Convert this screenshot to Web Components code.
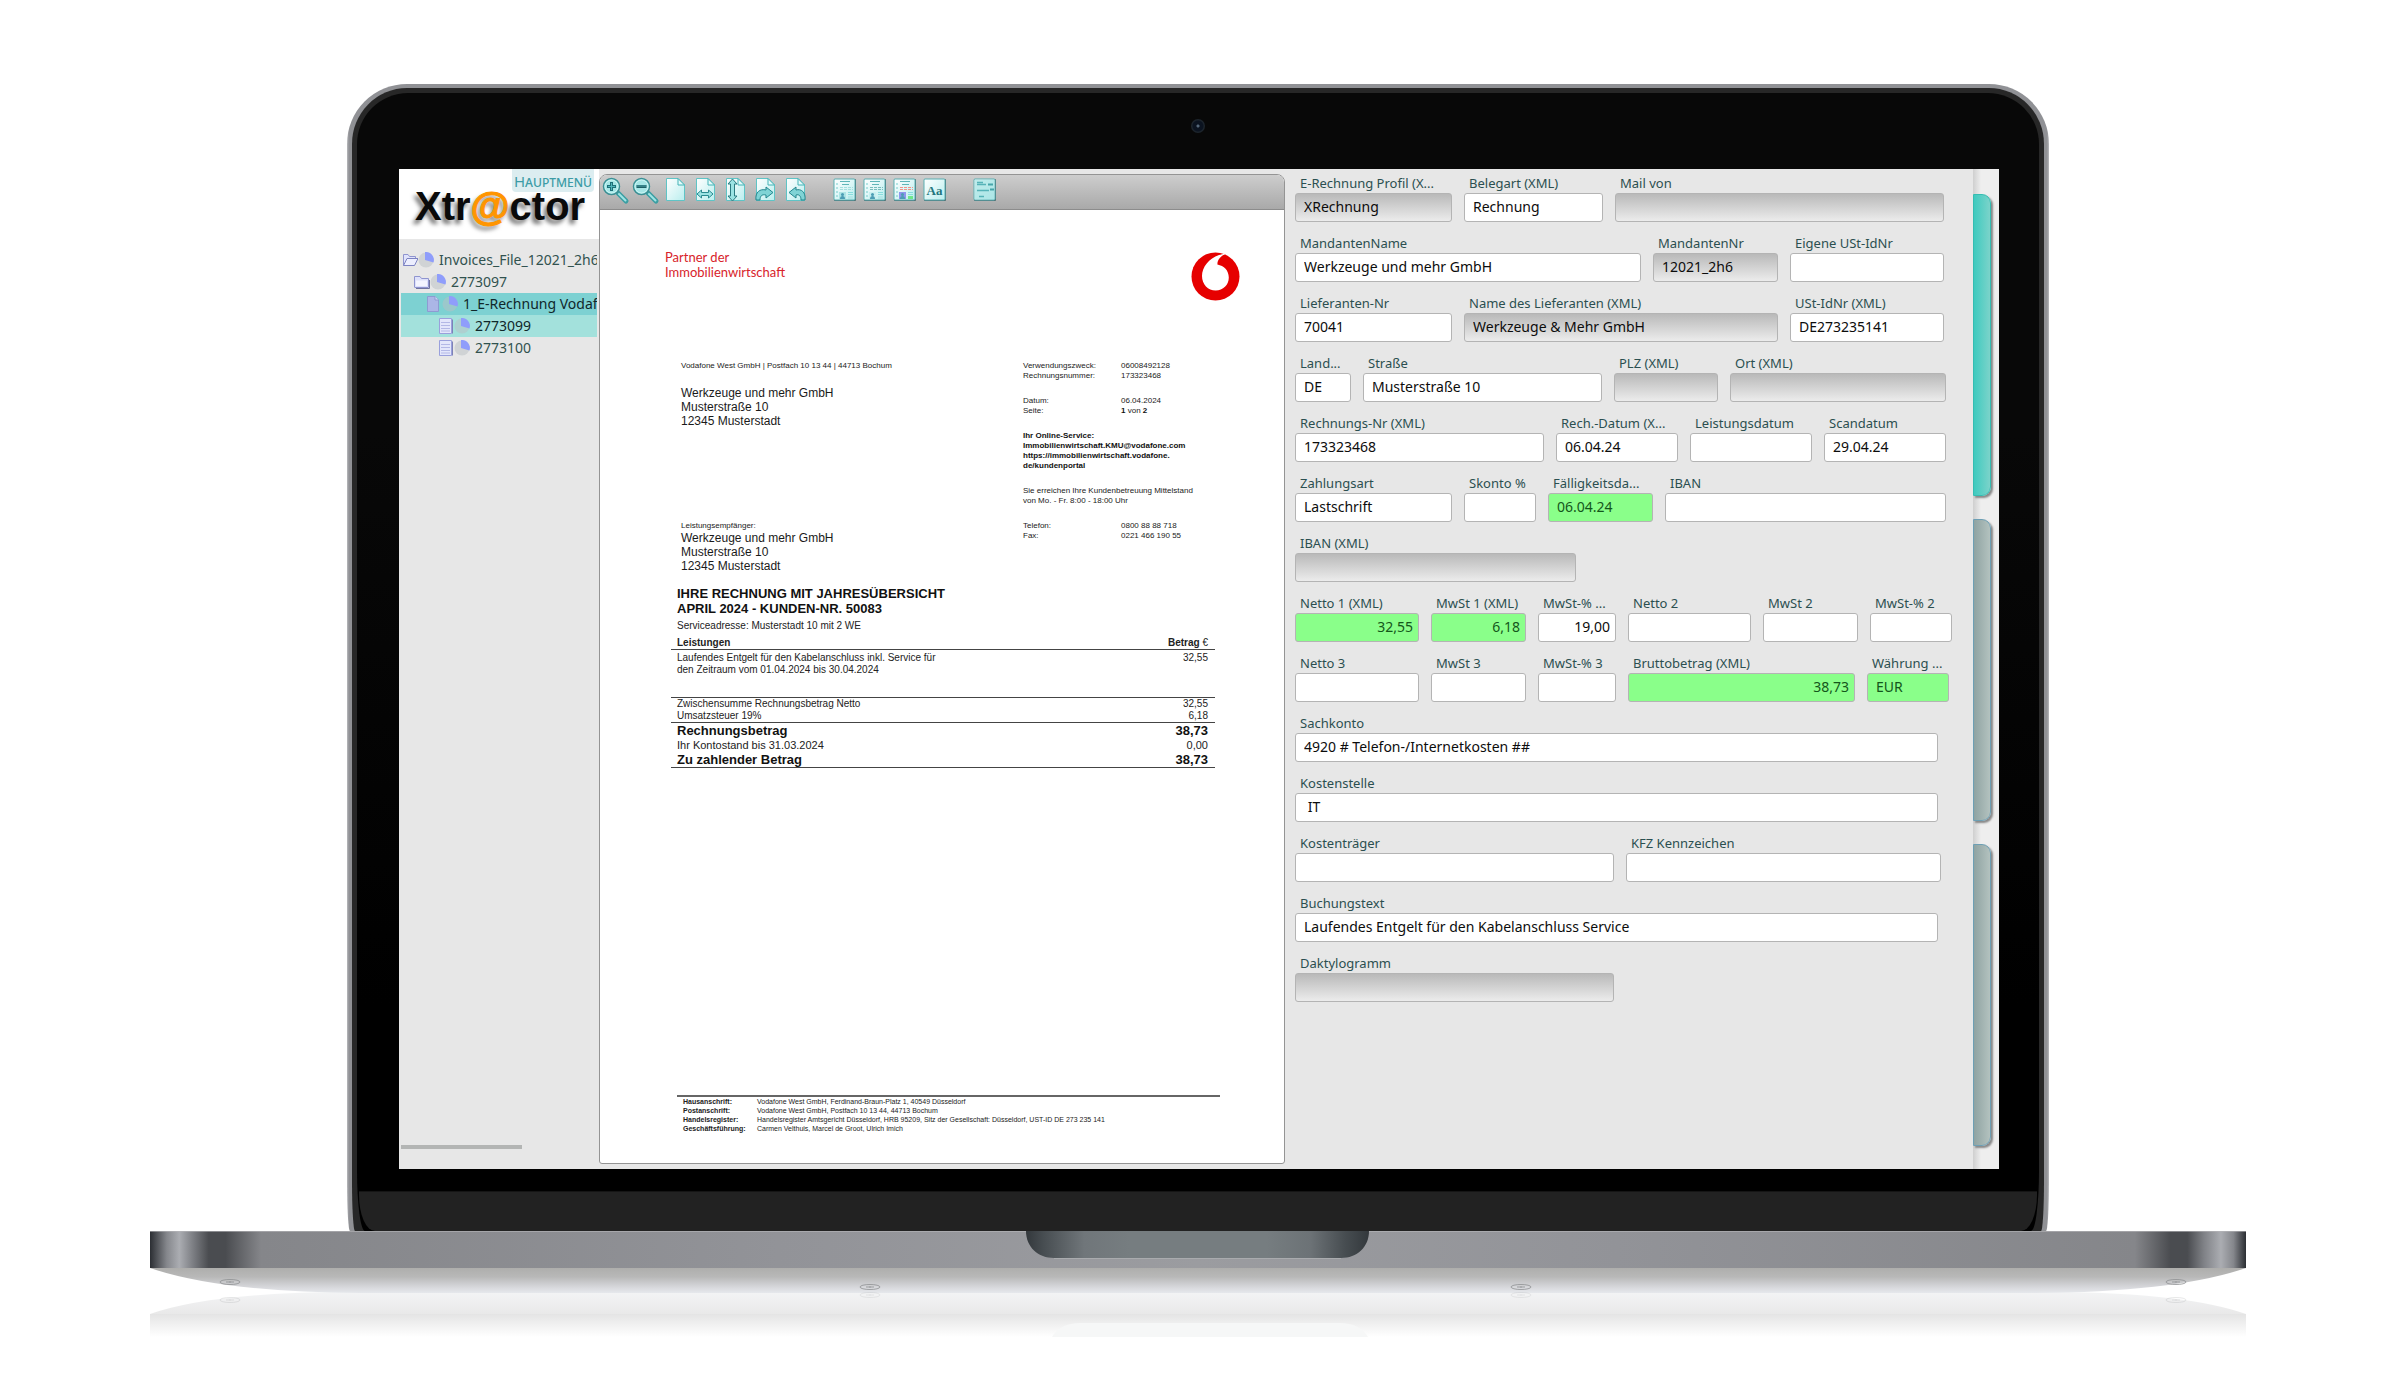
<!DOCTYPE html>
<html lang="de">
<head>
<meta charset="utf-8">
<title>Xtr@ctor</title>
<style>
  body { margin: 0; background: #fff; font-family: "Noto Sans", "Open Sans", sans-serif; font-size: 13px; color: #111; }
</style>
</head>
<body>
<laptop-frame>
  <xt-sidebar>
    <tree-node icon="open" level="0">Invoices_File_12021_2h6_</tree-node>
    <tree-node icon="folder" level="1">2773097</tree-node>
    <tree-node icon="file" level="2" state="selected">1_E-Rechnung Vodafone</tree-node>
    <tree-node icon="page" level="3" state="related">2773099</tree-node>
    <tree-node icon="page" level="3">2773100</tree-node>
  </xt-sidebar>
  <doc-viewer><invoice-page></invoice-page></doc-viewer>
  <xt-form></xt-form>
  <side-tabs></side-tabs>
</laptop-frame>

<script>
function define(name, html, setup) {
  const template = document.createElement('template');
  customElements.define(name, class extends HTMLElement {
    connectedCallback() {
      if (this.shadowRoot) return;
      const root = this.attachShadow({ mode: 'open' });
      template.innerHTML = typeof html === 'function' ? html(this) : html;
      root.append(template.content.cloneNode(true));
      if (setup) setup(this, root);
    }
  });
}

/* ---------- Laptop ---------- */
const foot = (x, y, o) => `<g opacity="${o}" fill="none" stroke="#8f9193"><ellipse cx="${x}" cy="${y}" rx="10" ry="2.5"/><path d="M${x - 4} ${y}h8M${x} ${y - 1}v2"/></g>`;
define('laptop-frame', `
<style>
  :host { display: block; padding: 84px 149px 0 150px; }
  .lid { margin: 0 197px; padding: 4px 5px 0; background: linear-gradient(90deg, #b9babd 0, #909195 2px, #909195 calc(100% - 2px), #b9babd); border-radius: 60px 60px 3px 3px / 60px 60px 50px 50px; }
  .rim { padding: 5px 5px 0; background: #272727; border-radius: 55px 55px 3px 3px / 56px 56px 50px 50px; }
  .bezel { background: linear-gradient(#080808, #080808 30%, #000 80%); border-radius: 51px 51px 8px 8px / 51px 51px 60px 60px; }
  .top { height: 76px; display: flex; justify-content: center; align-items: flex-start; }
  .camera { width: 14px; height: 14px; margin-top: 26px; border-radius: 50%; background: radial-gradient(circle, #56687a 0 1px, #0b1320 2px 5px, #1c242c 6px); }
  .screen { display: flex; margin: 0 40px 22px 42px; background: #e7e7e7; overflow: hidden; }
  .chin { height: 39px; margin: 0 2px; background: #222; border-top: 1px solid #151515; border-radius: 0 0 16px 16px / 0 0 36px 36px; }
  svg { display: block; width: 100%; height: 146px; }
</style>
<div class="lid"><div class="rim"><div class="bezel">
  <div class="top"><div class="camera"></div></div>
  <div class="screen"><slot></slot></div>
  <div class="chin"></div>
</div></div></div>
<svg viewBox="0 0 2096 146" preserveAspectRatio="none" aria-hidden="true">
  <defs>
    <linearGradient id="metal">
      <stop offset="0" stop-color="#2b2e33"/><stop offset=".008" stop-color="#85878c"/><stop offset=".014" stop-color="#abadb2"/>
      <stop offset=".02" stop-color="#808287"/><stop offset=".028" stop-color="#4a4c50"/><stop offset=".036" stop-color="#4a4c50"/>
      <stop offset=".053" stop-color="#85868a"/><stop offset=".3" stop-color="#929398"/><stop offset=".5" stop-color="#9b9ca0"/><stop offset=".7" stop-color="#929398"/>
      <stop offset=".947" stop-color="#85868a"/><stop offset=".964" stop-color="#4a4c50"/><stop offset=".972" stop-color="#4a4c50"/>
      <stop offset=".98" stop-color="#808287"/><stop offset=".988" stop-color="#abadb2"/><stop offset=".994" stop-color="#85878c"/><stop offset="1" stop-color="#2b2e33"/>
    </linearGradient>
    <linearGradient id="under" x2="0" y2="1"><stop offset="0" stop-color="#aeaeac"/><stop offset=".35" stop-color="#b8b8b8"/><stop offset=".8" stop-color="#d9dade"/><stop offset="1" stop-color="#e6e8ec"/></linearGradient>
    <linearGradient id="refl" x2="0" y2="1"><stop offset="0" stop-color="#f3f4f5"/><stop offset="1" stop-color="#e9e9e9"/></linearGradient>
    <linearGradient id="fade" x2="0" y2="1"><stop offset="0" stop-color="#e4e4e4"/><stop offset="1" stop-color="#fff"/></linearGradient>
    <linearGradient id="notch"><stop offset="0" stop-color="#33383c"/><stop offset=".05" stop-color="#474d51"/><stop offset=".17" stop-color="#70767a"/><stop offset=".3" stop-color="#767d80"/><stop offset=".7" stop-color="#767d80"/><stop offset=".83" stop-color="#6c7276"/><stop offset=".93" stop-color="#474d51"/><stop offset="1" stop-color="#33383c"/></linearGradient>
  </defs>
  <rect y="83" width="2096" height="23" fill="url(#fade)"/>
  <path d="M902 106Q910 92 930 92H1190Q1210 92 1218 106Z" fill="#f6f7f7"/>
  <path d="M0 83Q60 62 190 61H1906Q2036 62 2096 83Z" fill="url(#refl)"/>
  <path d="M0 37Q70 61 210 62H1886Q2026 61 2096 37Z" fill="url(#under)"/>
  <rect width="2096" height="37" fill="url(#metal)"/>
  <path d="M0 .5H2096" stroke="#b7b8bb" stroke-opacity=".6"/>
  <path d="M876 0H1219C1219 16 1207 27 1191 27H904C888 27 876 16 876 0Z" fill="url(#notch)"/>
  <path d="M904 27.5H1191" stroke="#a9abae"/>
  ${foot(80, 51, .8)}${foot(720, 56, .8)}${foot(1371, 56, .8)}${foot(2026, 51, .8)}
  ${foot(80, 69, .2)}${foot(720, 64, .15)}${foot(1371, 64, .15)}${foot(2026, 69, .2)}
</svg>`);

/* ---------- Sidebar ---------- */
define('xt-sidebar', `
<style>
  :host { flex: 0 0 200px; min-width: 0; display: flex; flex-direction: column; }
  header { position: relative; height: 70px; background: #fff; }
  h1 { margin: 0; padding: 14px 0 0 16px; font: bold 40px/46px "Liberation Sans", sans-serif; color: #0a0a0a; text-shadow: -3px 4px 4px #777; }
  h1 span { color: #ff9500; -webkit-text-stroke: 1px #ff9500; }
  button { position: absolute; top: 0; right: 5px; width: 82px; height: 23px; padding: 0; border: 0; border-radius: 0 0 4px 4px; background: #dcedf0; color: #3d9ca6; font: small-caps 15px/20px "Noto Sans", sans-serif; white-space: nowrap; }
  nav { flex: 1; margin: 10px 2px 0; overflow: hidden; }
  .scroll { width: 121px; height: 4px; margin: 0 2px 20px; background: #b3b5b4; }
</style>
<header><h1>Xtr<span>@</span>ctor</h1><button>Hauptmenü</button></header>
<nav><slot></slot></nav>
<div class="scroll"></div>`);

const treeIcons = {
  open: '<path d="M1.500 13.500V2.500H6L7.500 4.500H13.500V6.500" fill="#dfe2fb" stroke="#8f94cf"/><path d="M1.500 13.500L5 6.500H16L12.500 13.500Z" fill="#eceefe" stroke="#7d83c2"/>',
  folder: '<path d="M.500 13V2.500H6L7.500 4.500H14.500V13Q14.500 13.500 14 13.500H1Q.500 13.500 .500 13Z" fill="#dde0fa" stroke="#8f94cf"/><path d="M2 6.500H13V12H2Z" fill="#f3f4ff"/><path d="M15.500 6V14.500H2" stroke="#6f739f" fill="none"/>',
  file: '<path d="M1.500 .500H9L12.500 4V15.500H1.500Z" fill="#abb6e6" stroke="#8d9bd2"/><path d="M9 .500V4H12.500" fill="#cfd6f5" stroke="#8d9bd2"/>',
  page: '<path d="M1.500 .500H13.500V15.500H1.500Z" fill="#e3e6fb" stroke="#9aa0dc"/><path d="M3 4.500H12M3 7.500H12M3 10.500H12M3 13H12" stroke="#b3b8e6"/><path d="M14.500 1.500V15.500" stroke="#7d82b5"/>'
};
define('tree-node', el => `
<style>
  :host { display: flex; align-items: center; height: 22px; padding-left: calc(1px + 12px * ${el.getAttribute('level')}); color: #31524f; white-space: nowrap; }
  :host([state=selected]) { background: #7dd1d2; color: #10272a; }
  :host([state=related]) { background: #a3e1dc; color: #10272a; }
  svg { flex: none; }
  a { padding-left: 5px; color: inherit; text-decoration: none; font-size: 14px; line-height: 20px; }
</style>
<svg width="16" height="16" aria-hidden="true">${treeIcons[el.getAttribute('icon')]}</svg>
<svg width="16" height="16" aria-hidden="true"><circle cx="8" cy="8" r="7.500" fill="#b9bfc4" fill-opacity=".5"/><path d="M7 8V0A8 8 0 0 1 15.500 10.500Z" fill="#8f9dfb"/></svg>
<a href="#"><slot></slot></a>`);

/* ---------- Viewer ---------- */
const sheet = '<path d="M6.500 3.500H18L24.500 10V25.500H6.500Z" fill="url(#p)" stroke="#5fc4c6"/><path d="M18 3.500V10H24.500Z" fill="#e4fbfb" stroke="#45b3b6"/>';
const glass = inner => `<path d="M18 18L26 26" stroke="#3b9ea2" stroke-width="5" stroke-linecap="round"/><path d="M19 19L25.500 25.500" stroke="#9fe4e4" stroke-width="2" stroke-linecap="round"/><circle cx="11.500" cy="11.500" r="8" fill="#a6e6e6" stroke="#3b8f94" stroke-width="1.500"/><circle cx="11.500" cy="11.500" r="6.500" fill="none" stroke="#c9f5f4"/>${inner}`;
const plate = inner => `<rect x="4" y="4" width="22" height="22" rx="1" fill="#4c6c70"/><rect x="4" y="4" width="21" height="21" rx="1" fill="url(#p)" stroke="#5bb0b3"/>${inner}`;
const news = (a, b, c) => `<path d="M10 6.500H20M12 9.500H19" stroke="#5fb5b8"/><path d="M6 9h2M6 13h2M6 17h2M6 21h2" stroke="#7cc"/><path d="M10 12.500H23M10 14.500H23" stroke="${c}" stroke-dasharray="3 1"/><rect x="9" y="17" width="7" height="7" fill="${a}"/><circle cx="12.500" cy="19.500" r="1.500" fill="#4c9db4"/><path d="M10 24q0-3 2.500-3t2.500 3z" fill="#4c9db4"/><path d="M18 17.500h5M18 19.500h5" stroke="#8dd"/><rect x="18" y="21" width="5" height="3" fill="${b}"/>`;
const tools = [
  ['Vergrößern', glass('<path d="M11.500 7V16M7 11.500H16" stroke="#1d7078" stroke-width="3"/><path d="M11.500 8V15M8 11.500H15" stroke="#4fb5bb"/>')],
  ['Verkleinern', glass('<path d="M6.500 11.500H16.500" stroke="#1d5f66" stroke-width="3"/><path d="M7 11H16" stroke="#4fa5aa"/>')],
  ['Seite', sheet],
  ['Breite', sheet + '<path d="M7 19L11.500 15V17.500H18.500V15L23 19L18.500 23V20.500H11.500V23Z" fill="#9be3e3" stroke="#2b8a90"/>'],
  ['Höhe', sheet + '<path d="M12.500 4L17 9H14.500V21H17L12.500 26L8 21H10.500V9H8Z" fill="#9be3e3" stroke="#2b7a80"/>'],
  ['Rechts drehen', sheet + '<path d="M6 25C5 17 10 13.500 16 15V12L23 17.500L16 23V20C12 19 10 21 10 25Z" fill="#7fd3d5" stroke="#23868d"/>'],
  ['Links drehen', sheet + '<path d="M25 25C26 17 21 13.500 16 15V12L9 17.500L16 23V20C19 19 21 21 21 25Z" fill="#7fd3d5" stroke="#23868d"/>'],
  null,
  ['Ansicht 1', plate(news('#aee5e5', '#b5e8e8', '#a5dede'))],
  ['Ansicht 2', plate(news('#c9f0f0', '#b5e8e8', '#79bcbc'))],
  ['Ansicht 3', plate(news('#8f96ee', '#6fe88a', '#f0948a'))],
  ['Text', plate('<text x="14.500" y="20" text-anchor="middle" font-family="Liberation Serif, serif" font-weight="bold" font-size="13" fill="#23767d">Aa</text>')],
  null,
  ['Karte', plate('<rect x="5" y="5" width="19" height="19" fill="#a5e2e2" fill-opacity=".7"/><path d="M7 7.500h6M7 9.500h9M7 15.500h12M9 21.500h5" stroke="#56b3b8" stroke-width="1.500"/><path d="M18 9.500h5M20 14.500h4" stroke="#47a5aa" stroke-width="2"/>')]
];
define('doc-viewer', `
<style>
  :host { flex: 1 1 686px; min-width: 0; display: flex; flex-direction: column; margin: 5px 0; border: 1px solid #949494; border-radius: 8px 8px 3px 3px; box-sizing: border-box; background: #fff; overflow: hidden; }
  .bar { display: flex; height: 34px; border-bottom: 1px solid #8c8c8c; background: linear-gradient(#cdcdcd, #a9a9a9); }
  button { width: 30px; height: 30px; padding: 0; border: 0; background: none; }
  i { width: 20px; }
  svg { display: block; }
</style>
<div class="bar" role="toolbar">${tools.map(t => t ? `<button aria-label="${t[0]}"><svg width="30" height="30"><defs><linearGradient id="p" x2="1" y2="1"><stop offset="0" stop-color="#fff"/><stop offset="1" stop-color="#b9eeee"/></linearGradient></defs>${t[1]}</svg></button>` : '<i></i>').join('')}</div>
<slot></slot>`);

define('invoice-page', `
<style>
  :host { display: block; font: 8px/10px "Liberation Sans", Arial, sans-serif; color: #222; }
  p, h2, address, dl, dd { margin: 0; font-style: normal; }
  header { display: flex; justify-content: space-between; align-items: flex-start; padding: 40px 44px 60px 65px; }
  .partner { font: 13px/15px Lato, sans-serif; color: #d8232a; }
  header svg { margin-top: 2px; }
  .cols { display: grid; grid-template-columns: 342fr 261fr; padding-left: 81px; }
  address { font-size: 12px; line-height: 14px; color: #1a1a1a; }
  .from { margin-bottom: 15px; }
  .recv { margin-top: 93px; }
  .meta { display: flex; flex-direction: column; gap: 15px; }
  dl { display: grid; grid-template-columns: 98px 1fr; }
  b { color: #111; }
  h2 { padding: 13px 77px 4px; font-size: 13px; line-height: 15px; color: #111; }
  .srv { padding: 0 77px 5px; font-size: 10px; line-height: 12px; }
  table { border-spacing: 0; border-collapse: separate; }
  .sum { width: calc(100% - 140px); margin: 0 69px 0 71px; font-size: 10px; line-height: 12px; }
  .sum td, .sum th { padding: 0 7px 0 6px; text-align: left; vertical-align: top; }
  .sum td:last-child, .sum th:last-child { text-align: right; }
  .line > * { border-bottom: 1px solid #444; }
  .sum .item td { padding-top: 2px; padding-bottom: 21px; }
  .sum .total td { font-size: 13px; line-height: 15px; font-weight: bold; color: #111; }
  .sum .mid td { font-size: 11px; line-height: 14px; }
  .sum span { font-weight: normal; }
  .foot { width: calc(100% - 141px); margin: 327px 64px 29px 77px; border-top: 2px solid #666; font-size: 7px; line-height: 9px; }
  .foot th, .foot td { padding: 0; text-align: left; }
  .foot th { width: 74px; padding-left: 6px; }
</style>
<header>
  <p class="partner">Partner der<br>Immobilienwirtschaft</p>
  <svg width="49" height="49" viewBox="0 0 49 49" role="img" aria-label="Vodafone"><circle cx="24.500" cy="24.500" r="24" fill="#e60000"/><path d="M24.700 38.500C17 38.500 11 32.500 11 24C11 15 18 6.500 28 3C30 2.300 33 1.800 34.500 2C29.500 4 26.200 8 26.400 12.600C33 14 37.800 18.500 37.800 25.500C37.800 33 32 38.500 24.700 38.500Z" fill="#fff"/></svg>
</header>
<section class="cols">
  <div>
    <p class="from">Vodafone West GmbH | Postfach 10 13 44 | 44713 Bochum</p>
    <address>Werkzeuge und mehr GmbH<br>Musterstraße 10<br>12345 Musterstadt</address>
    <p class="recv">Leistungsempfänger:</p>
    <address>Werkzeuge und mehr GmbH<br>Musterstraße 10<br>12345 Musterstadt</address>
  </div>
  <div class="meta">
    <dl><dt>Verwendungszweck:</dt><dd>06008492128</dd><dt>Rechnungsnummer:</dt><dd>173323468</dd></dl>
    <dl><dt>Datum:</dt><dd>06.04.2024</dd><dt>Seite:</dt><dd><b>1</b> von <b>2</b></dd></dl>
    <p><b>Ihr Online-Service:<br>Immobilienwirtschaft.KMU@vodafone.com<br>https://immobilienwirtschaft.vodafone.<br>de/kundenportal</b></p>
    <p>Sie erreichen Ihre Kundenbetreuung Mittelstand<br>von Mo. - Fr. 8:00 - 18:00 Uhr</p>
    <dl><dt>Telefon:</dt><dd>0800 88 88 718</dd><dt>Fax:</dt><dd>0221 466 190 55</dd></dl>
  </div>
</section>
<h2>IHRE RECHNUNG MIT JAHRESÜBERSICHT<br>APRIL 2024 - KUNDEN-NR. 50083</h2>
<p class="srv">Serviceadresse: Musterstadt 10 mit 2 WE</p>
<table class="sum">
  <tr class="line"><th>Leistungen</th><th>Betrag <span>€</span></th></tr>
  <tr class="line item"><td>Laufendes Entgelt für den Kabelanschluss inkl. Service für<br>den Zeitraum vom 01.04.2024 bis 30.04.2024</td><td>32,55</td></tr>
  <tr><td>Zwischensumme Rechnungsbetrag Netto</td><td>32,55</td></tr>
  <tr class="line"><td>Umsatzsteuer 19%</td><td>6,18</td></tr>
  <tr class="total"><td>Rechnungsbetrag</td><td>38,73</td></tr>
  <tr class="mid"><td>Ihr Kontostand bis 31.03.2024</td><td>0,00</td></tr>
  <tr class="line total"><td>Zu zahlender Betrag</td><td>38,73</td></tr>
</table>
<table class="foot">
  <tr><th>Hausanschrift:</th><td>Vodafone West GmbH, Ferdinand-Braun-Platz 1, 40549 Düsseldorf</td></tr>
  <tr><th>Postanschrift:</th><td>Vodafone West GmbH, Postfach 10 13 44, 44713 Bochum</td></tr>
  <tr><th>Handelsregister:</th><td>Handelsregister Amtsgericht Düsseldorf, HRB 95209, Sitz der Gesellschaft: Düsseldorf, UST-ID DE 273 235 141</td></tr>
  <tr><th>Geschäftsführung:</th><td>Carmen Velthuis, Marcel de Groot, Ulrich Imich</td></tr>
</table>`);

/* ---------- Form ---------- */
define('form-field', `
<style>
  :host { display: block; min-width: 0; }
  label { display: block; height: 20px; padding-left: 5px; font-size: 13px; line-height: 20px; color: #2b4f50; white-space: nowrap; }
  input { display: block; box-sizing: border-box; width: 100%; height: 29px; padding: 0 5px 2px 8px; border: 1px solid #b4b4b4; border-radius: 3px; background: #fff; color: #0c0c0c; font: 14px "Noto Sans", sans-serif; }
  input[readonly] { background: linear-gradient(#b9b9b9, #ececec); }
  :host([kind~=ok]) input { background: #8aff8a; color: #14561b; }
  :host([kind~=num]) input { text-align: right; }
</style>
<label for="f"></label><input id="f" type="text">`,
(el, root) => {
  const input = root.querySelector('input');
  root.querySelector('label').textContent = el.getAttribute('label');
  input.value = el.getAttribute('value');
  if (/ro/.test(el.getAttribute('kind'))) input.readOnly = true;
});

/* each row: trailing free space, then [label, relative width, value, kind] */
const rows = [
  [8, ['E-Rechnung Profil (X...', 157, 'XRechnung', 'ro'], ['Belegart (XML)', 139, 'Rechnung'], ['Mail von', 329, '', 'ro']],
  [8, ['MandantenName', 346, 'Werkzeuge und mehr GmbH'], ['MandantenNr', 125, '12021_2h6', 'ro'], ['Eigene USt-IdNr', 154, '']],
  [8, ['Lieferanten-Nr', 157, '70041'], ['Name des Lieferanten (XML)', 314, 'Werkzeuge & Mehr GmbH', 'ro'], ['USt-IdNr (XML)', 154, 'DE273235141']],
  [6, ['Land...', 56, 'DE'], ['Straße', 239, 'Musterstraße 10'], ['PLZ (XML)', 104, '', 'ro'], ['Ort (XML)', 216, '', 'ro']],
  [6, ['Rechnungs-Nr (XML)', 249, '173323468'], ['Rech.-Datum (X...', 122, '06.04.24'], ['Leistungsdatum', 122, ''], ['Scandatum', 122, '29.04.24']],
  [6, ['Zahlungsart', 157, 'Lastschrift'], ['Skonto %', 72, ''], ['Fälligkeitsda...', 105, '06.04.24', 'ok'], ['IBAN', 281, '']],
  [376, ['IBAN (XML)', 281, '', 'ro']],
  [0, ['Netto 1 (XML)', 124, '32,55', 'ok num'], ['MwSt 1 (XML)', 95, '6,18', 'ok num'], ['MwSt-% ...', 78, '19,00', 'num'], ['Netto 2', 123, ''], ['MwSt 2', 95, ''], ['MwSt-% 2', 82, '']],
  [3, ['Netto 3', 124, ''], ['MwSt 3', 95, ''], ['MwSt-% 3', 78, ''], ['Bruttobetrag (XML)', 227, '38,73', 'ok num'], ['Währung ...', 82, 'EUR', 'ok']],
  [14, ['Sachkonto', 643, '4920 # Telefon-/Internetkosten ##']],
  [14, ['Kostenstelle', 643, ' IT']],
  [11, ['Kostenträger', 319, ''], ['KFZ Kennzeichen', 315, '']],
  [14, ['Buchungstext', 643, 'Laufendes Entgelt für den Kabelanschluss Service']],
  [338, ['Daktylogramm', 319, '', 'ro']]
];
define('xt-form', `
<style>
  :host { flex: 1 1 688px; min-width: 0; box-sizing: border-box; padding: 4px 21px 0 10px; }
  form { display: flex; flex-direction: column; gap: 11px; }
  .row { display: flex; gap: 12px; }
</style>
<form>${rows.map(([end, ...fields]) => `<div class="row" style="padding-right:${end}px">${fields.map(f =>
  `<form-field style="flex:${f[1]} 1 0" label="${f[0]}" value="${f[2].replace('&', '&amp;')}" kind="${f[3] || ''}"></form-field>`).join('')}</div>`).join('')}</form>`);

define('side-tabs', `
<style>
  :host { flex: 0 0 26px; display: flex; flex-direction: column; gap: 23px; padding: 25px 0 23px; box-sizing: border-box; background: linear-gradient(90deg, #cfcfcf, #eee 8px); }
  button { flex: 0 0 302px; width: 18px; padding: 0; border: 1px solid #6d9fb4; border-radius: 0 9px 9px 0; background: linear-gradient(90deg, #8fa3a2, #b3c2bf); box-shadow: 2px 2px 2px #888; }
  button.on { border-color: #35bdb2; background: linear-gradient(90deg, #3fcabf, #7bd3ca); }
</style>
<button class="on" aria-label="Tab 1"></button><button aria-label="Tab 2"></button><button aria-label="Tab 3"></button>`);
</script>
</body>
</html>
